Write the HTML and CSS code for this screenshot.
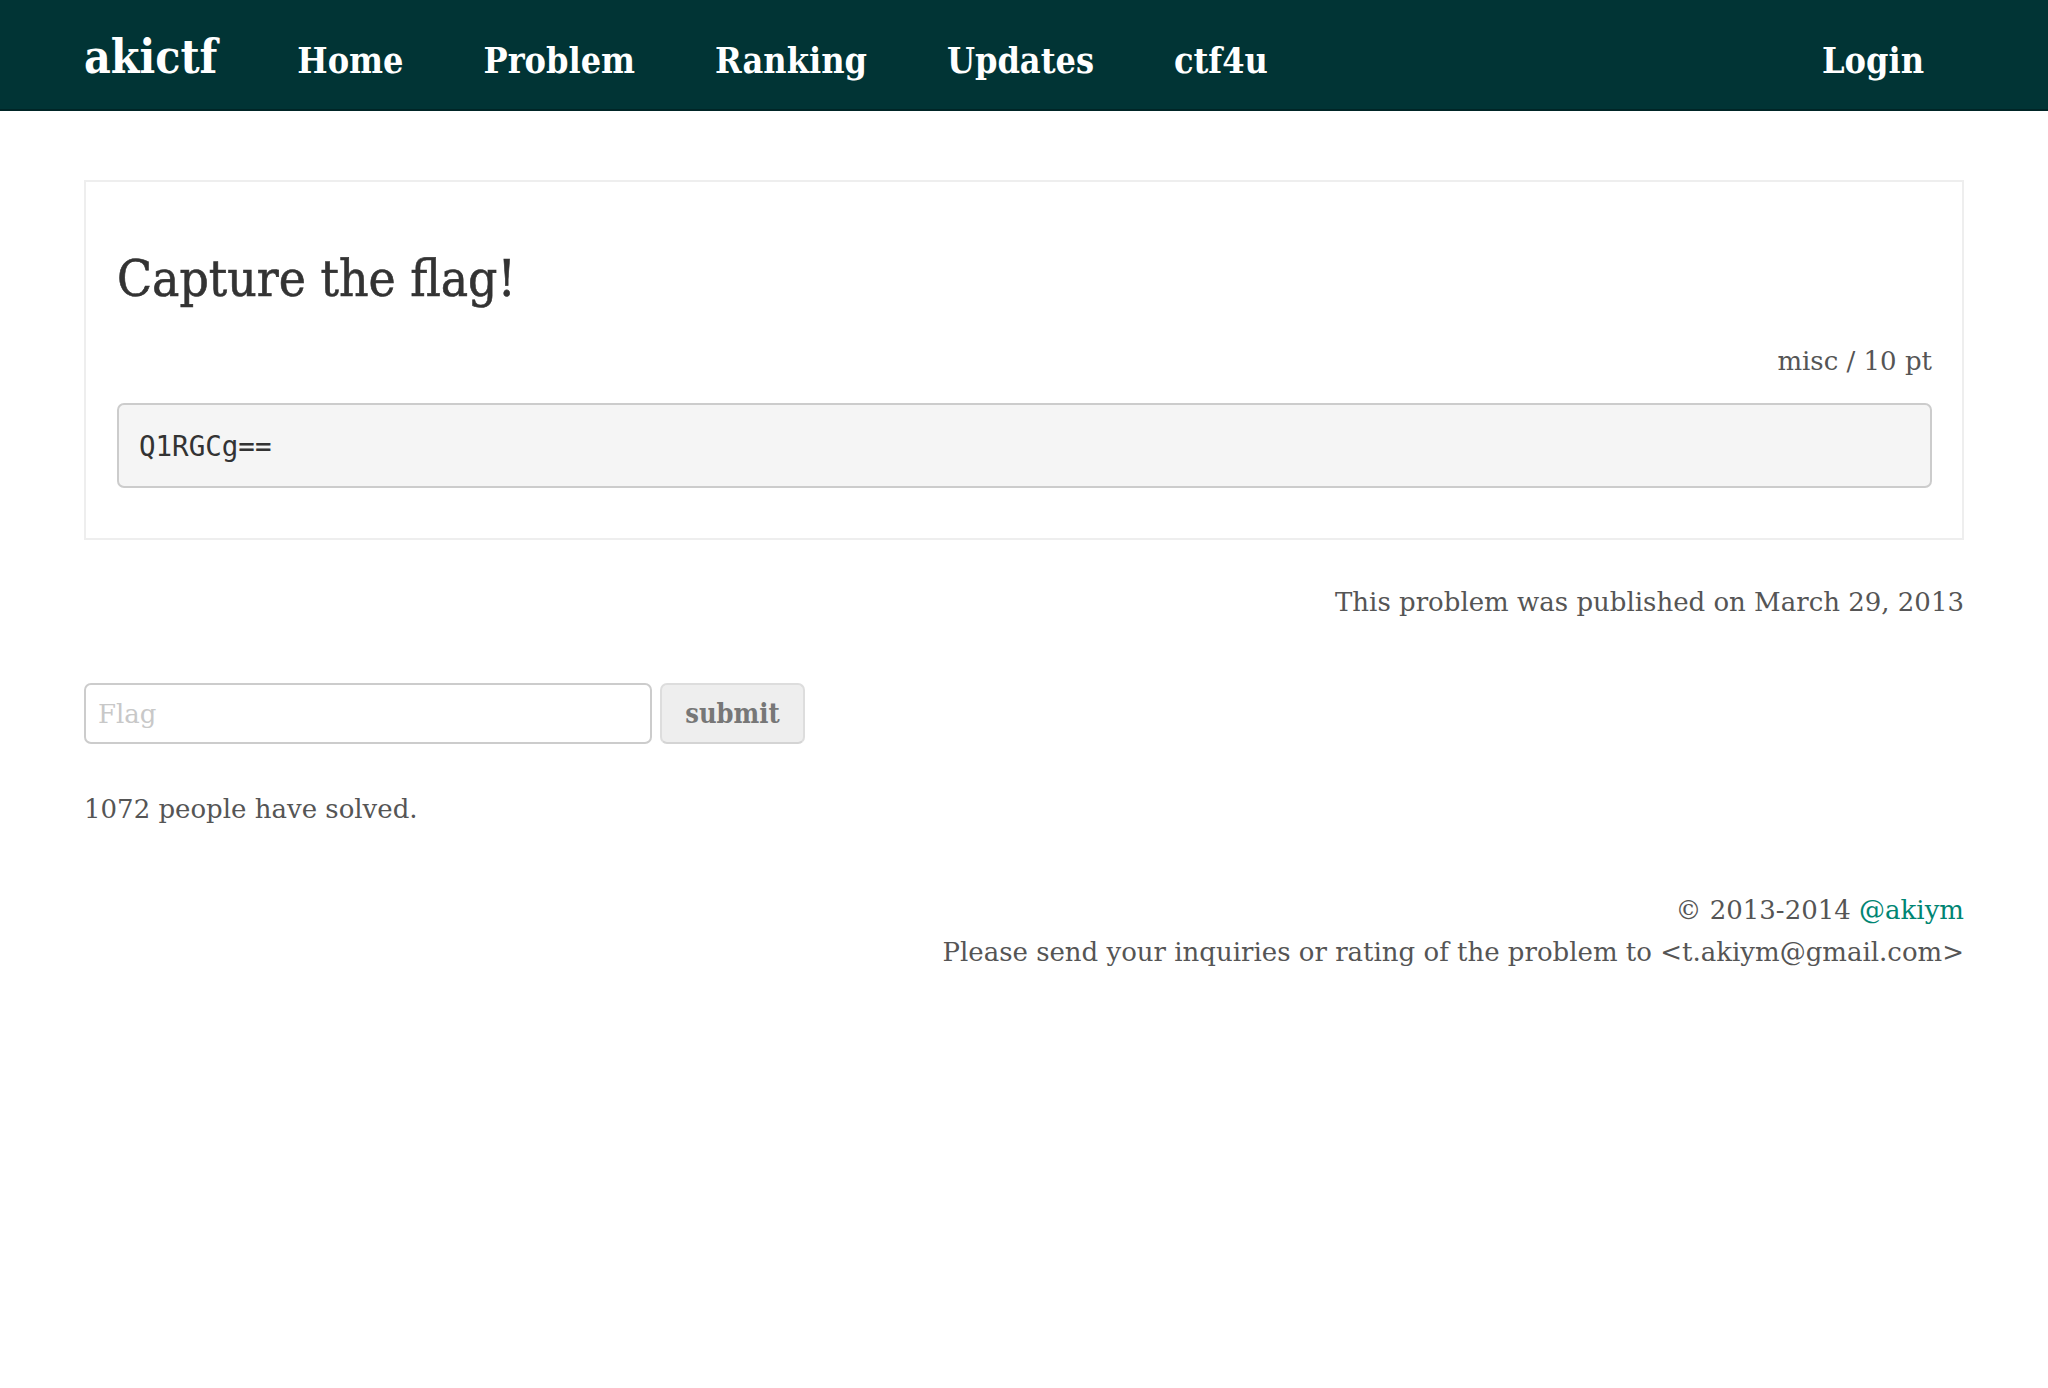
FILE: index.html
```html
<!DOCTYPE html>
<html>
<head>
<meta charset="utf-8">
<title>akictf</title>
<link rel="stylesheet" href="styles.css">
</head>
<body>
<nav class="navbar">
  <div class="nav-inner">
    <a class="brand" href="#">akictf</a>
    <ul class="nav-links">
      <li><a href="#">Home</a></li>
      <li><a href="#">Problem</a></li>
      <li><a href="#">Ranking</a></li>
      <li><a href="#">Updates</a></li>
      <li><a href="#">ctf4u</a></li>
    </ul>
    <ul class="nav-links nav-right">
      <li><a href="#">Login</a></li>
    </ul>
  </div>
</nav>
<main class="container">
  <section class="panel">
    <h1 class="title">Capture the flag!</h1>
    <p class="meta">misc / 10 pt</p>
    <pre class="code">Q1RGCg==</pre>
  </section>
  <p class="published">This problem was published on March 29, 2013</p>
  <form class="flag-form">
    <input class="flag-input" type="text" placeholder="Flag">
    <button class="submit-btn" type="button">submit</button>
  </form>
  <p class="solved">1072 people have solved.</p>
  <footer class="footer">
    <p>&copy; 2013-2014 <a href="#">@akiym</a></p>
    <p>Please send your inquiries or rating of the problem to &lt;t.akiym@gmail.com&gt;</p>
  </footer>
</main>
</body>
</html>
```
FILE: styles.css
```css
* { box-sizing: border-box; }
html, body { margin: 0; padding: 0; background: #fff; }
body {
  font-family: "DejaVu Serif", "Liberation Serif", serif;
  font-size: 26px;
  color: #555;
}
.navbar {
  background: #013435;
  height: 111px;
  border-bottom: 2px solid #002526;
}
.nav-inner {
  display: flex;
  align-items: center;
  height: 109px;
  padding: 11px 84px 0;
}
.brand {
  font-family: "DejaVu Serif Condensed", "DejaVu Serif", serif;
  font-stretch: condensed;
  font-weight: bold;
  font-size: 46px;
  color: #fff;
  text-decoration: none;
  padding-right: 40px;
  margin-top: -6px;
}
.nav-links {
  display: flex;
  list-style: none;
  margin: 0;
  padding: 0;
}
.nav-links a {
  display: block;
  padding: 0 40px;
  font-family: "DejaVu Serif Condensed", "DejaVu Serif", serif;
  font-stretch: condensed;
  font-weight: bold;
  font-size: 35.7px;
  color: #fff;
  text-decoration: none;
}
.nav-right { margin-left: auto; }
.container {
  padding: 69px 84px 0;
}
.panel {
  border: 2px solid #eeeeee;
  padding: 32px 30px 50px 31px;
}
.title {
  font-family: "DejaVu Serif Condensed", "DejaVu Serif", serif;
  font-stretch: condensed;
  font-weight: normal;
  -webkit-text-stroke: 0.6px #333;
  font-size: 51px;
  color: #333;
  margin: 34px 0 0;
  line-height: 1.2;
}
.meta {
  text-align: right;
  margin: 32px 0 22px;
  line-height: 40px;
}
.code {
  margin: 0;
  background: #f5f5f5;
  border: 2px solid #cccccc;
  border-radius: 7px;
  height: 85px;
  padding: 0 20px;
  display: flex;
  align-items: center;
  font-family: "DejaVu Sans Mono", "Liberation Mono", monospace;
  font-size: 27.5px;
  color: #333;
}
.published {
  text-align: right;
  margin: 42px 0 0;
  line-height: 40px;
}
.flag-form {
  display: flex;
  gap: 8px;
  margin-top: 61px;
}
.flag-input {
  width: 568px;
  height: 61px;
  border: 2px solid #cccccc;
  border-radius: 7px;
  padding: 0 12px;
  font-family: "DejaVu Serif", serif;
  font-size: 26px;
  color: #555;
}
.flag-input::placeholder { color: #c8c8c8; }
.submit-btn {
  width: 145px;
  height: 61px;
  background: #eeeeee;
  border: 2px solid #dddddd;
  border-bottom-color: #d4d4d4;
  border-radius: 7px;
  font-family: "DejaVu Serif Condensed", "DejaVu Serif", serif;
  font-stretch: condensed;
  font-weight: bold;
  font-size: 27px;
  color: #777;
}
.solved {
  margin: 45px 0 0;
  line-height: 40px;
}
.footer {
  text-align: right;
  margin-top: 60px;
}
.footer p { margin: 0; line-height: 42px; }
.footer a { color: #008573; text-decoration: none; }
```
